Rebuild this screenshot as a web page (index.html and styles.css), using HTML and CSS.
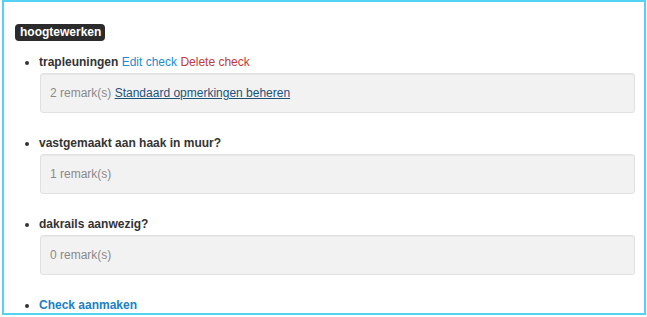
FILE: index.html
```html
<!DOCTYPE html>
<html>
<head>
<meta charset="utf-8">
<link rel="stylesheet" href="styles.css">
</head>
<body>
<div class="panel">
  <span class="label">hoogtewerken</span>
  <ul class="checks">
    <li>
      <strong>trapleuningen</strong> <a class="edit" href="#">Edit check</a> <a class="delete" href="#">Delete check</a>
      <div class="well">2 remark(s) <a class="manage" href="#">Standaard opmerkingen beheren</a></div>
    </li>
    <li>
      <strong>vastgemaakt aan haak in muur?</strong>
      <div class="well">1 remark(s)</div>
    </li>
    <li>
      <strong>dakrails aanwezig?</strong>
      <div class="well">0 remark(s)</div>
    </li>
    <li>
      <a class="create" href="#">Check aanmaken</a>
    </li>
  </ul>
</div>
</body>
</html>
```

FILE: styles.css
```css
html, body {
  margin: 0;
  padding: 0;
  background: #fff;
}
body {
  font-family: "Liberation Sans", Arial, sans-serif;
  font-size: 12px;
  line-height: 17px;
  color: #333;
}
.panel {
  margin: 0 1px 0 2px;
  height: 315px;
  box-sizing: border-box;
  border: 2px solid #55d2f3;
  padding: 22px 10px 0 11px;
  overflow: hidden;
}
.label {
  display: inline-block;
  background: #2b2b2b;
  color: #fff;
  font-weight: bold;
  font-size: 12px;
  line-height: 17px;
  padding: 0 4px 0 5px;
  border-radius: 4px;
}
.checks {
  margin: 13px 0 0 0;
  padding: 0 0 0 24px;
  list-style: disc;
}
.checks li {
  margin-bottom: 22px;
}
.checks strong {
  font-weight: bold;
  color: #333;
}
a {
  text-decoration: none;
}
.edit {
  color: #1d8ccc;
}
.delete {
  color: #c0393b;
}
.create {
  color: #1a80c4;
  font-weight: bold;
}
.well {
  margin-top: 2px;
  margin-left: 1px;
  margin-right: -1px;
  background: #f2f2f2;
  border: 1px solid #e1e1e1;
  border-radius: 3px;
  box-shadow: inset 0 1px 1px rgba(0,0,0,0.04);
  padding: 10px 9px;
  line-height: 18px;
  color: #8a8a8a;
}
.manage {
  color: #1d5279;
  text-decoration: underline;
}
```
